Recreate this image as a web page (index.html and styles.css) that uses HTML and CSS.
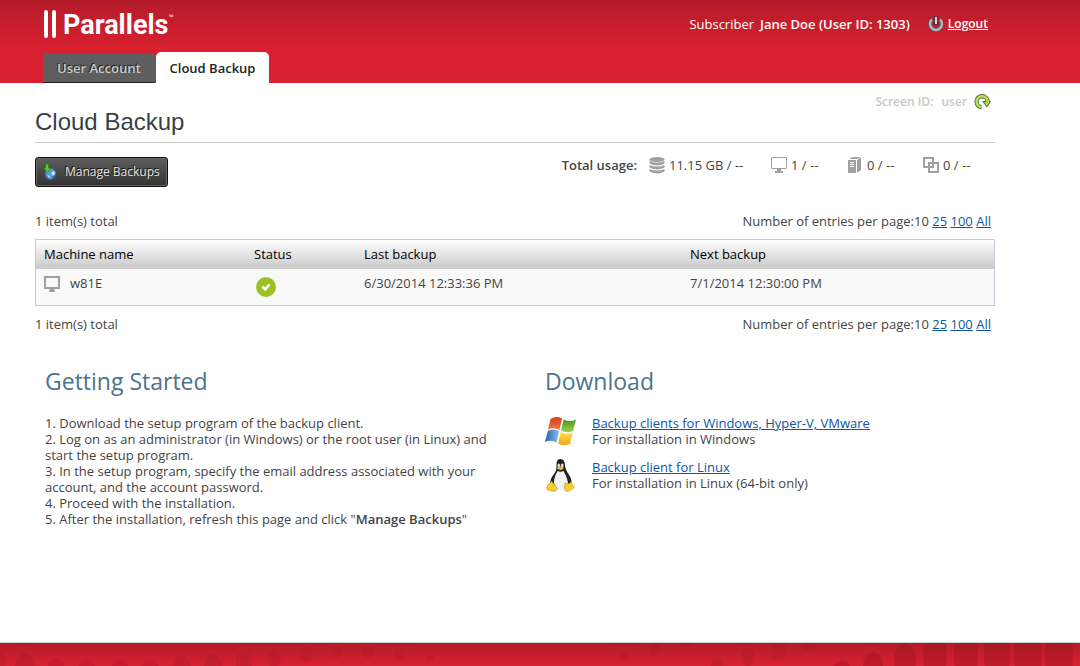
FILE: index.html
```html
<!DOCTYPE html>
<html lang="en">
<head>
<meta charset="utf-8">
<title>Cloud Backup</title>
<link rel="stylesheet" href="styles.css">
</head>
<body>
<header class="top">
  <div class="brand-row">
    <svg class="logo" width="132" height="32" viewBox="0 0 132 32" role="img" aria-label="Parallels">
      <rect x="1" y="2" width="4" height="28" rx="2" fill="#fff"/>
      <rect x="9" y="2" width="4" height="28" rx="2" fill="#fff"/>
      <text class="logo-text" x="20" y="26">Parallels</text>
      <text class="logo-tm" x="126" y="11">™</text>
    </svg>
    <div class="account">
      <span>Subscriber</span>
      <strong>Jane Doe (User ID: 1303)</strong>
      <a class="logout" href="#logout">
        <svg width="16" height="16" viewBox="0 0 16 16" aria-hidden="true">
          <path d="M4 3.500A6 6 0 1 0 12 3.500" fill="none" stroke="#5b4a50" stroke-width="4"/>
          <path d="M4 3.500A6 6 0 1 0 12 3.500" fill="none" stroke="#b3b7c0" stroke-width="2.400"/>
          <path d="M8 0v9" stroke="#4b3338" stroke-width="4"/>
          <path d="M8 1v7" stroke="#d6d6da" stroke-width="2"/>
        </svg>
        <span>Logout</span>
      </a>
    </div>
  </div>
  <nav class="tabs">
    <a class="tab" href="#account">User Account</a>
    <a class="tab tab-active" href="#backup" aria-current="page">Cloud Backup</a>
  </nav>
</header>

<main class="page">
  <div class="screen-id">
    <span>Screen ID:</span><span>user</span>
    <button class="refresh" type="button" aria-label="Refresh">
      <svg width="16" height="16" viewBox="0 0 16 16" aria-hidden="true">
        <path d="M6.500 13.200A5.500 5.500 0 1 1 12.600 7.500" fill="none" stroke="#4f7030" stroke-width="4.400"/>
        <path d="M8 7.500h7.500L11.800 13z" fill="#a5d64a" stroke="#4f7030"/>
        <path d="M6.700 13.200A5.500 5.500 0 1 1 12.600 8.500" fill="none" stroke="#b5dc68" stroke-width="2.600"/>
      </svg>
    </button>
  </div>
  <h1>Cloud Backup</h1>

  <div class="toolbar">
    <button class="manage" type="button">
      <svg width="14" height="16" viewBox="0 0 14 16" aria-hidden="true">
        <circle cx="7.500" cy="10" r="5.500" fill="#5b9bdc"/>
        <path d="M2.500 9q1 5 5 6.400Q3 15 2 10zM12.800 9a5.400 5.400 0 0 1-4 6.400l1-4z" fill="#2c64a8"/>
        <path d="M8 9l3-2 1 3-2 2zM4 11l3 1-1 2z" fill="#c6e4fa"/>
        <path d="M2.500 0h3v4h2.500L4.500 9 0.500 4h2z" fill="#4fc73a" stroke="#23731a" stroke-width=".6"/>
      </svg>
      <span>Manage Backups</span>
    </button>
    <div class="usage">
      <strong>Total usage:</strong>
      <span class="usage-item usage-storage">
        <svg width="16" height="17" viewBox="0 0 16 17" aria-hidden="true"><g fill="#a0a0a0"><ellipse cx="8" cy="2.500" rx="7.500" ry="2.500"/><path d="M.5 4q7.500 3 15 0v2.500q-7.500 4-15 0zM.5 8q7.500 3 15 0v2.500q-7.500 4-15 0zM.5 12q7.500 3 15 0v2.500q-7.500 4-15 0z"/></g></svg>
        11.15 GB / --
      </span>
      <span class="usage-item">
        <svg width="16" height="16" viewBox="0 0 16 16" aria-hidden="true"><path d="M.5.500h15v11H.5z" fill="#fff" stroke="#a0a0a0"/><path d="M6 12h4v2h2v2H4v-2h2z" fill="#a0a0a0"/></svg>
        1 / --
      </span>
      <span class="usage-item">
        <svg width="16" height="16" viewBox="0 0 16 16" aria-hidden="true"><path d="M1 3h8v13H1zM2 2l4-2h8l-4 2zM10 3l4-2.500V13l-4 3z" fill="#a0a0a0"/><path d="M3 5.500h4M3 7.500h4M3 9.500h4" stroke="#fff"/></svg>
        0 / --
      </span>
      <span class="usage-item">
        <svg width="16" height="16" viewBox="0 0 16 16" aria-hidden="true"><path d="M1 1h9v9H1zM6 6h9v9H6z" fill="none" stroke="#a0a0a0" stroke-width="2"/></svg>
        0 / --
      </span>
    </div>
  </div>

  <div class="pager">
    <span>1 item(s) total</span>
    <span>Number of entries per page:10 <a href="#p25">25</a> <a href="#p100">100</a> <a href="#all">All</a></span>
  </div>
  <table class="machines">
    <colgroup><col class="col-name"><col class="col-status"><col class="col-last"><col></colgroup>
    <thead>
      <tr><th scope="col">Machine name</th><th scope="col">Status</th><th scope="col">Last backup</th><th scope="col">Next backup</th></tr>
    </thead>
    <tbody>
      <tr>
        <td><span class="machine">
          <svg width="16" height="16" viewBox="0 0 16 16" aria-hidden="true"><path d="M1 2h14v11H1z" fill="none" stroke="#a0a0a0" stroke-width="2"/><path d="M6 13h4l1 4H5z" fill="#a0a0a0"/></svg>
          <span>w81E</span></span></td>
        <td class="status"><svg width="20" height="20" viewBox="0 0 20 20" role="img" aria-label="OK"><circle cx="10" cy="10" r="10" fill="#9ac225"/><path d="M6.500 9.500l2.800 2.800 4.200-5" fill="none" stroke="#fff" stroke-width="2.600"/></svg></td>
        <td>6/30/2014 12:33:36 PM</td>
        <td>7/1/2014 12:30:00 PM</td>
      </tr>
    </tbody>
  </table>
  <div class="pager">
    <span>1 item(s) total</span>
    <span>Number of entries per page:10 <a href="#p25">25</a> <a href="#p100">100</a> <a href="#all">All</a></span>
  </div>

  <div class="columns">
    <section>
      <h2>Getting Started</h2>
      <ol class="steps">
        <li>Download the setup program of the backup client.</li>
        <li>Log on as an administrator (in Windows) or the root user (in Linux) and start the setup program.</li>
        <li>In the setup program, specify the email address associated with your account, and the account password.</li>
        <li>Proceed with the installation.</li>
        <li>After the installation, refresh this page and click "<strong>Manage Backups</strong>"</li>
      </ol>
    </section>
    <section>
      <h2>Download</h2>
      <div class="download">
        <svg width="32" height="32" viewBox="0 0 32 32" aria-hidden="true">
          <defs>
            <linearGradient id="wr" x2="0" y2="1"><stop stop-color="#d8401b"/><stop offset="1" stop-color="#ee7b3c"/></linearGradient>
            <linearGradient id="wg" x2="0" y2="1"><stop stop-color="#4d9422"/><stop offset="1" stop-color="#9bd04a"/></linearGradient>
            <linearGradient id="wb"><stop stop-color="#2462a8"/><stop offset="1" stop-color="#8fc0ea"/></linearGradient>
            <linearGradient id="wy" x2="0" y2="1"><stop stop-color="#ffe14a"/><stop offset="1" stop-color="#f2a416"/></linearGradient>
          </defs>
          <path d="M5.500 4Q11 .5 17 3.500L14.500 15Q9 12 3 14.500z" fill="url(#wr)"/>
          <path d="M18.500 4.500Q25 7.500 31 4.500L28 16Q22 18.500 16 15.800z" fill="url(#wg)"/>
          <path d="M2.800 16Q9 13 14.200 16.200L11.500 27.500Q6 24.500 0 27z" fill="url(#wb)"/>
          <path d="M15.700 17Q22 20 27.800 17.500L25 29Q18 31.500 13 28.500z" fill="url(#wy)"/>
        </svg>
        <div>
          <a href="#windows">Backup clients for Windows, Hyper-V, VMware</a>
          <p>For installation in Windows</p>
        </div>
      </div>
      <div class="download">
        <svg width="32" height="32" viewBox="0 0 32 32" aria-hidden="true">
          <path d="M11.500 5Q11.500 0 15.500 0T20 6q0 4 3.500 9t3 10L22 30H9L5 25q0-5 4-10 3-4 2.500-10z" fill="#222"/>
          <path d="M12.500 12q3 1.500 6 0 5 9 4.500 14-2 5-7.500 5t-6-5q-2-5 3-14z" fill="#f1f1f3"/>
          <ellipse cx="13.800" cy="6.500" rx="1.300" ry="2" fill="#ddd"/><ellipse cx="17.200" cy="6.500" rx="1.400" ry="2" fill="#ddd"/>
          <path d="M11.500 9Q15.500 6 19 9 16 13 11.500 9z" fill="#f4b71c"/>
          <path d="M6.500 22q3 4 6 8-2 3.500-6 2L2 30.500Q1 29 2.500 27q0-2 2-2z" fill="#f6d02f" stroke="#c08b12" stroke-width=".6"/>
          <path d="M20 24q4 2 6-1 1 3 3.500 5-1 2-7 4.500-3 0-3-3z" fill="#f6d02f" stroke="#c08b12" stroke-width=".6"/>
        </svg>
        <div>
          <a href="#linux">Backup client for Linux</a>
          <p>For installation in Linux (64-bit only)</p>
        </div>
      </div>
    </section>
  </div>
</main>

<footer class="bottom">
  <svg width="1080" height="23" viewBox="0 0 1080 23" aria-hidden="true">
    <g fill="#a51824" opacity=".28">
      <ellipse cx="0" cy="22" rx="5" ry="14"/><ellipse cx="25" cy="25" rx="10" ry="15"/><ellipse cx="56" cy="28" rx="9" ry="13"/><ellipse cx="87" cy="28" rx="9" ry="11"/><ellipse cx="120" cy="28" rx="9" ry="11"/><ellipse cx="150" cy="28" rx="9" ry="12"/><ellipse cx="182" cy="26" rx="9" ry="13"/><ellipse cx="213" cy="23" rx="9" ry="12"/><ellipse cx="244" cy="19" rx="8" ry="11"/><ellipse cx="274" cy="15" rx="7" ry="9"/><ellipse cx="306" cy="11" rx="7" ry="8"/><ellipse cx="337" cy="9" rx="6" ry="6"/><ellipse cx="368" cy="9" rx="6" ry="6"/><ellipse cx="399" cy="11" rx="5" ry="5"/><ellipse cx="430" cy="15" rx="4" ry="3"/>
      <ellipse cx="623" cy="13" rx="5" ry="5"/><ellipse cx="655" cy="6" rx="6" ry="7"/><ellipse cx="686" cy="0" rx="6" ry="4"/><ellipse cx="717" cy="21" rx="6" ry="5"/><ellipse cx="748" cy="14" rx="7" ry="9"/><ellipse cx="779" cy="7" rx="8" ry="10"/><ellipse cx="809" cy="0" rx="8" ry="8"/>
    </g>
    <g fill="#8e0f1c" opacity=".3">
      <ellipse cx="842" cy="24" rx="8" ry="6"/><ellipse cx="873" cy="22" rx="10" ry="13"/><ellipse cx="905" cy="17" rx="11" ry="17"/><ellipse cx="935" cy="14" rx="12" ry="24"/><ellipse cx="966" cy="12" rx="12" ry="32"/><ellipse cx="997" cy="12" rx="13" ry="36"/><ellipse cx="1028" cy="12" rx="14" ry="40"/><ellipse cx="1059" cy="12" rx="14" ry="44"/>
    </g>
  </svg>
</footer>
</body>
</html>
```
FILE: styles.css
```css
* { box-sizing: border-box; }
body {
  margin: 0;
  min-height: 100vh;
  display: flex;
  flex-direction: column;
  background: #fff;
  color: #444;
  font: 13px/16px "Open Sans", "Noto Sans", sans-serif;
}
a { color: #0c56a4; }
p, h1, h2 { margin: 0; }
svg { display: block; flex: none; overflow: visible; }
button { font: inherit; cursor: pointer; }
strong { font-weight: 600; }

.top {
  background: linear-gradient(#b41c28, #d82030 48px, #d82030);
  color: #fff;
}
.brand-row {
  display: flex;
  justify-content: space-between;
  align-items: flex-start;
  max-width: 988px;
  height: 52px;
  padding: 8px 0 0 43px;
}
.logo-text { font: 700 27px Roboto, sans-serif; fill: #fff; }
.logo-tm { font: 6px "Noto Sans", sans-serif; fill: #fff; }
.account { display: flex; gap: 6px; padding-top: 8px; }
.logout { display: flex; gap: 4px; margin-left: 12px; color: #fff; font-size: 12px; font-weight: 600; }
.tabs { display: flex; align-items: flex-end; gap: 1px; padding-left: 43px; }
.tab {
  padding: 7px 14px 6px;
  border-bottom: 1px solid #222;
  border-radius: 4px 4px 0 0;
  background: #5e5e5e;
  color: #ccc;
  font-weight: 600;
  text-decoration: none;
  text-shadow: -1px -1px 0 #222;
}
.tab-active {
  padding: 8px 14px 7px;
  border: 0;
  border-radius: 5px 5px 0 0;
  background: #fff;
  color: #222;
  text-shadow: none;
}

.page { flex: 1; width: 100%; max-width: 995px; padding: 11px 0 0 35px; }
.screen-id {
  display: flex;
  justify-content: flex-end;
  align-items: center;
  gap: 8px;
  padding-right: 4px;
  color: #c8c8c8;
  font-size: 12px;
  font-weight: 600;
}
.refresh { padding: 0; border: 0; background: none; }
h1 {
  padding-bottom: 9px;
  border-bottom: 1px solid #c8c8c8;
  color: #3a3f47;
  font: 24px/23px "Liberation Sans", Arial, sans-serif;
}
.toolbar { display: flex; justify-content: space-between; padding: 14px 20px 0 0; }
.manage {
  display: flex;
  align-items: center;
  gap: 8px;
  height: 30px;
  padding: 0 7px;
  border: 1px solid #111;
  border-radius: 3px;
  background: linear-gradient(#5e5e5e, #333);
  box-shadow: inset 0 0 0 1px #666;
  color: #e2e2e2;
  font-size: 12px;
  text-shadow: -1px -1px 0 #111;
}
.usage { display: flex; align-items: flex-start; gap: 24px; }
.usage strong { margin-right: -12px; }
.usage-item { display: flex; gap: 4px; min-width: 52px; white-space: nowrap; }
.usage-storage { min-width: 98px; }

.pager { display: flex; justify-content: space-between; padding-right: 4px; }
.toolbar + .pager { padding-top: 26px; padding-bottom: 10px; }
.machines + .pager { padding-top: 10px; }
.machines {
  width: 100%;
  table-layout: fixed;
  border-collapse: separate;
  border-spacing: 0;
  border: 1px solid #c3ccd4;
  background: #f9f9f9;
}
.col-name { width: 210px; }
.col-status { width: 110px; }
.col-last { width: 326px; }
.machines th {
  padding: 6px 8px 7px;
  background: linear-gradient(#fff, #c8c8c8);
  color: #000;
  font-weight: 400;
  text-align: left;
}
.machines td { height: 36px; padding: 6px 8px; vertical-align: top; }
.machines .status { padding: 8px 10px; }
.machine { display: flex; gap: 10px; }

.columns { display: grid; grid-template-columns: 450px 1fr; gap: 50px; padding: 36px 10px 40px; }
h2 { margin-bottom: 21px; color: #4c738f; font: 23px/26px "Open Sans", sans-serif; }
.steps { margin: 0; padding: 0; list-style: none; counter-reset: step; }
.steps li { counter-increment: step; }
.steps li::before { content: counter(step) ". "; }
.download { display: flex; gap: 15px; margin-bottom: 12px; }

.bottom {
  overflow: hidden;
  border-top: 1px solid #ccc;
  background: linear-gradient(#b41c28, #d82030);
}
.bottom svg { width: 100%; }
```
